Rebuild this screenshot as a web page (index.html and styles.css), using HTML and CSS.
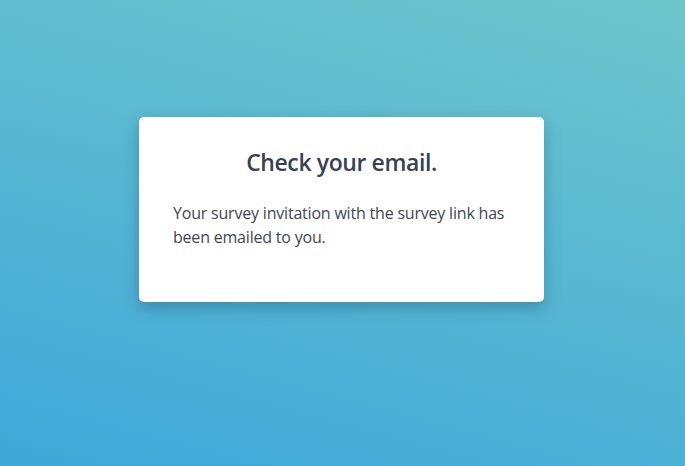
FILE: index.html
```html
<!DOCTYPE html>
<html lang="en">
<head>
<meta charset="utf-8">
<title>Check your email</title>
<link rel="stylesheet" href="styles.css">
</head>
<body>
<main class="page">
  <section class="card">
    <h1 class="card-title">Check your email.</h1>
    <p class="card-text">Your survey invitation with the survey link has been emailed to you.</p>
  </section>
</main>
</body>
</html>
```

FILE: styles.css
```css
html, body {
  margin: 0;
  padding: 0;
  height: 100%;
}

body {
  font-family: "Open Sans", "Liberation Sans", sans-serif;
  background: linear-gradient(15deg, #3fa7d9 0%, #6ec6cc 100%);
  background-attachment: fixed;
}

.page {
  display: flex;
  justify-content: center;
  padding-top: 117px;
}

.card {
  box-sizing: border-box;
  width: 405px;
  height: 185px;
  margin-left: -2px;
  background: #fff;
  border-radius: 5px;
  box-shadow: 0 6px 16px rgba(20, 70, 100, 0.35);
  padding: 31px 34px 0;
}

.card-title {
  margin: 0 0 24px;
  font-size: 23px;
  line-height: 29px;
  font-weight: 600;
  letter-spacing: -0.4px;
  color: #38414f;
  text-align: center;
}

.card-text {
  margin: 0;
  font-size: 16px;
  line-height: 24px;
  letter-spacing: -0.2px;
  color: #414653;
}
```
